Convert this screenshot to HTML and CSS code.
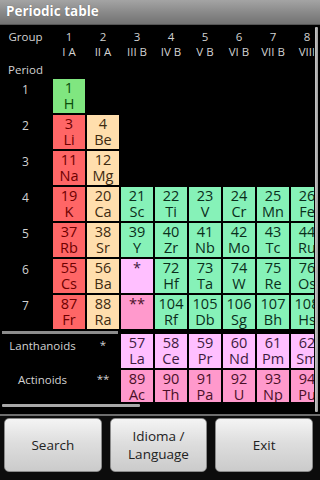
FILE: index.html
```html
<!DOCTYPE html>
<html>
<head>
<meta charset="utf-8">
<link rel="stylesheet" href="styles.css">
</head>
<body>
<div class="app">
  <header class="titlebar">Periodic table</header>
  <main class="main">
    <div class="scroll">
      <div class="ptable">
        <div class="hlabel">Group</div>
        <div class="ghead">1<br>I A</div>
        <div class="ghead">2<br>II A</div>
        <div class="ghead">3<br>III B</div>
        <div class="ghead">4<br>IV B</div>
        <div class="ghead">5<br>V B</div>
        <div class="ghead">6<br>VI B</div>
        <div class="ghead">7<br>VII B</div>
        <div class="ghead">8<br>VIII</div>

        <div class="hlabel period">Period</div>

        <div class="plabel">1</div>
        <div class="cell h">1<br>H</div>

        <div class="plabel">2</div>
        <div class="cell alk">3<br>Li</div>
        <div class="cell ae">4<br>Be</div>

        <div class="plabel">3</div>
        <div class="cell alk">11<br>Na</div>
        <div class="cell ae">12<br>Mg</div>

        <div class="plabel">4</div>
        <div class="cell alk">19<br>K</div>
        <div class="cell ae">20<br>Ca</div>
        <div class="cell tm">21<br>Sc</div>
        <div class="cell tm">22<br>Ti</div>
        <div class="cell tm">23<br>V</div>
        <div class="cell tm">24<br>Cr</div>
        <div class="cell tm">25<br>Mn</div>
        <div class="cell tm">26<br>Fe</div>

        <div class="plabel">5</div>
        <div class="cell alk">37<br>Rb</div>
        <div class="cell ae">38<br>Sr</div>
        <div class="cell tm">39<br>Y</div>
        <div class="cell tm">40<br>Zr</div>
        <div class="cell tm">41<br>Nb</div>
        <div class="cell tm">42<br>Mo</div>
        <div class="cell tm">43<br>Tc</div>
        <div class="cell tm">44<br>Ru</div>

        <div class="plabel">6</div>
        <div class="cell alk">55<br>Cs</div>
        <div class="cell ae">56<br>Ba</div>
        <div class="cell ln">*</div>
        <div class="cell tm">72<br>Hf</div>
        <div class="cell tm">73<br>Ta</div>
        <div class="cell tm">74<br>W</div>
        <div class="cell tm">75<br>Re</div>
        <div class="cell tm">76<br>Os</div>

        <div class="plabel">7</div>
        <div class="cell alk">87<br>Fr</div>
        <div class="cell ae">88<br>Ra</div>
        <div class="cell an">**</div>
        <div class="cell tm">104<br>Rf</div>
        <div class="cell tm">105<br>Db</div>
        <div class="cell tm">106<br>Sg</div>
        <div class="cell tm">107<br>Bh</div>
        <div class="cell tm">108<br>Hs</div>
      </div>

      <div class="ftable">
        <div class="sep"></div>

        <div class="flabel">Lanthanoids</div>
        <div class="star">*</div>
        <div class="cell ln">57<br>La</div>
        <div class="cell ln">58<br>Ce</div>
        <div class="cell ln">59<br>Pr</div>
        <div class="cell ln">60<br>Nd</div>
        <div class="cell ln">61<br>Pm</div>
        <div class="cell ln">62<br>Sm</div>

        <div class="flabel">Actinoids</div>
        <div class="star">**</div>
        <div class="cell an">89<br>Ac</div>
        <div class="cell an">90<br>Th</div>
        <div class="cell an">91<br>Pa</div>
        <div class="cell an">92<br>U</div>
        <div class="cell an">93<br>Np</div>
        <div class="cell an">94<br>Pu</div>
      </div>

      <div class="hthumb"></div>
    </div>
    <div class="vbar"></div>
  </main>
  <footer class="buttons">
    <button class="btn">Search</button>
    <button class="btn">Idioma /<br>Language</button>
    <button class="btn">Exit</button>
  </footer>
</div>
</body>
</html>
```
FILE: styles.css
```css
html, body {
  margin: 0;
  padding: 0;
  background: #000;
}
body {
  width: 320px;
  height: 480px;
  overflow: hidden;
  font-family: "Open Sans", "Noto Sans", sans-serif;
}
.app {
  display: flex;
  flex-direction: column;
  height: 480px;
}
.titlebar {
  height: 25px;
  box-sizing: border-box;
  padding: 0 0 3px 6px;
  line-height: 22px;
  font-size: 13.5px;
  font-weight: 700;
  color: #fff;
  background: linear-gradient(#a4a4a4, #8a8a8a 50%, #727272);
  border-bottom: 1px solid #555;
  text-shadow: 0 0 1px rgba(0,0,0,0.4);
}
.main {
  display: flex;
  height: 389px;
}
.scroll {
  width: 314px;
  overflow: hidden;
  padding-top: 2px;
}
.ptable, .ftable {
  display: grid;
  grid-template-columns: 51px repeat(8, 32px);
  column-gap: 2px;
  width: max-content;
}
.ptable {
  grid-template-rows: 31px 17px;
  grid-auto-rows: 34px;
  row-gap: 2px;
}
.hlabel, .ghead, .plabel, .flabel, .star {
  color: #d2d2d2;
  font-size: 11.5px;
  line-height: 15px;
  text-align: center;
}
.hlabel { grid-column: 1; padding-top: 2px; }
.ghead { white-space: nowrap; padding-top: 2px; }
.period { grid-column: 1; padding-top: 2px; }
.plabel {
  grid-column: 1;
  padding-top: 3px;
  font-size: 12px;
}
.cell {
  font-size: 14.5px;
  line-height: 16px;
  padding-top: 1px;
  box-sizing: border-box;
  text-align: center;
  white-space: nowrap;
  overflow: hidden;
}
.h   { background: #80e680; color: #0b4d0b; }
.alk { background: #ff6666; color: #6e0000; }
.ae  { background: #ffdead; color: #3d2a10; }
.tm  { background: #86f2b8; color: #0a2e1b; }
.ln  { background: #ffbfff; color: #3d1a3d; }
.an  { background: #ff99cc; color: #4a1028; }

.ftable {
  grid-template-rows: 3px 34px 34px;
  row-gap: 0;
  margin-top: 2px;
}
.sep {
  grid-column: 1 / 4;
  margin: 0 1px 0 2px;
  background: #8c8c8c;
}
.flabel {
  grid-column: 1 / 3;
  padding-top: 4px;
  white-space: nowrap;
}
.star {
  padding-top: 3px;
}
.ftable .an, .ftable .an ~ .flabel, .ftable .an ~ .star { margin-top: 2px; }
.hthumb {
  width: 138px;
  height: 3px;
  margin: 2px 0 0 2px;
  background: #a8a8a8;
  border-radius: 1px;
}
.vbar {
  width: 3px;
  margin: 2px 0 2px 1px;
  background: linear-gradient(90deg, #c8c8c8, #9a9a9a);
  border-radius: 1px;
}
.buttons {
  flex: 1;
  display: flex;
  gap: 8px;
  padding: 2px 7px 8px 4px;
  border-top: 2px solid #6e6e6e;
  background: #0c0c0c;
}
.btn {
  flex: 1;
  margin: 0;
  padding: 0;
  border: 1px solid #8a8a8a;
  border-radius: 5px;
  background: linear-gradient(#f4f4f4, #dedede 45%, #cbcbcb);
  font-family: "Open Sans", "Noto Sans", sans-serif;
  font-size: 13.5px;
  line-height: 18px;
  color: #222;
}
```
